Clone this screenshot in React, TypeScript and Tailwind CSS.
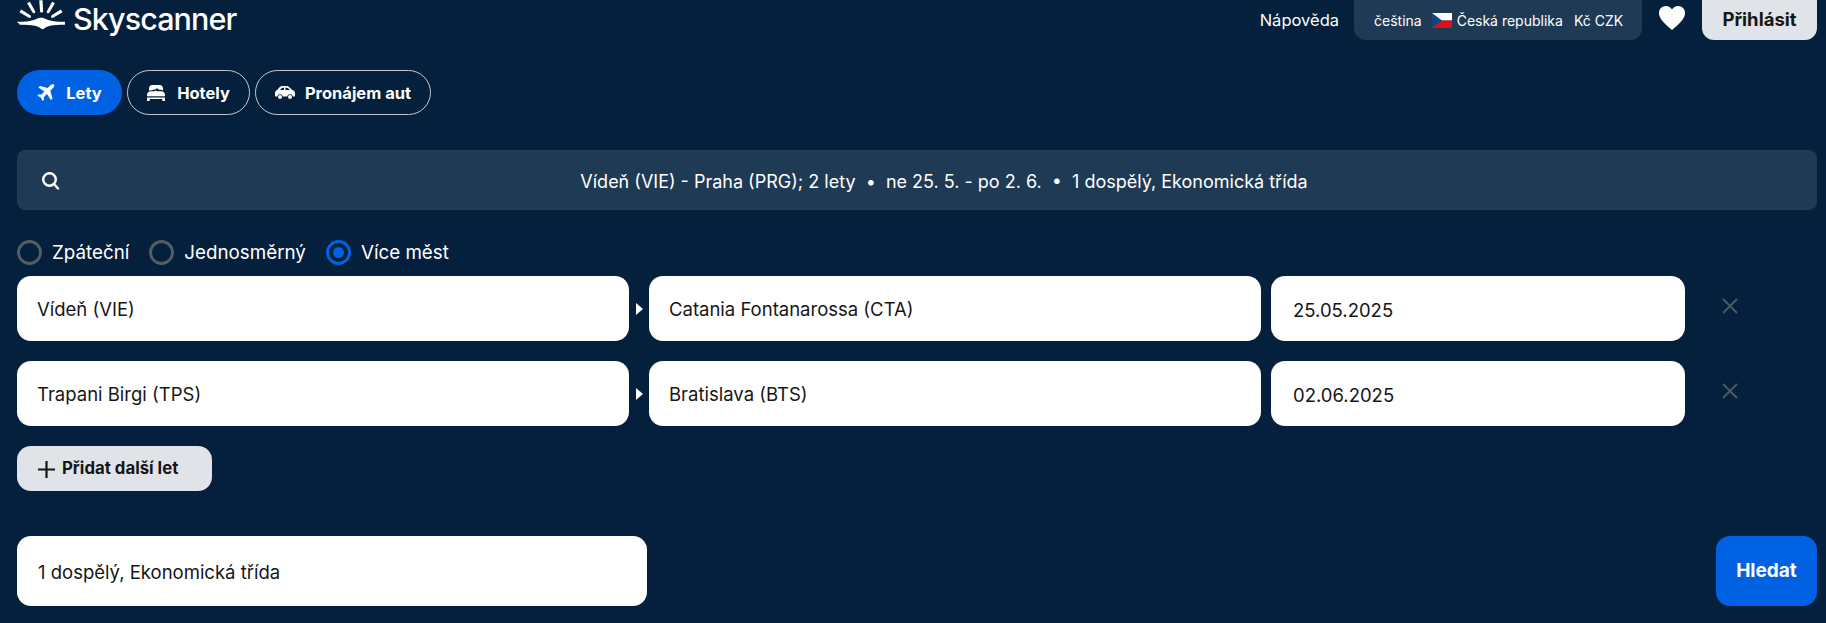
const font = "font-['Inter','Liberation_Sans',sans-serif]";

function Logo() {
  return (
    <div className="flex items-start h-[35px]">
      <svg width="48" height="31" viewBox="0 0 50 32" fill="#fff">
        <path d="M23.2 0h3.4l.6 11.5c0 .9-.6 1.5-1.6 1.5s-1.700-.6-1.600-1.500z" />
        <path d="M10.500 3.200l2.900-1.500 5.500 10c.4.800.1 1.500-.7 1.900s-1.600.1-2-.6z" />
        <path d="M39.500 3.200l-2.900-1.500-5.500 10c-.4.800-.1 1.500.7 1.900s1.600.1 2-.6z" />
        <path d="M2.600 12.500l1.800-2.800 9.500 6.100c.7.500.8 1.300.4 2s-1.200.9-1.900.5z" />
        <path d="M47.400 12.500l-1.800-2.800-9.500 6.100c-.7.500-.8 1.300-.4 2s1.200.9 1.900.5z" />
        <path d="M0 22.600c9.500 0 15.500-.9 20-3 1.900-.9 3.500-1.300 5-1.300s3.100.4 5 1.300c4.500 2.100 10.500 3 20 3v3.100c-6.500 0-11.500.2-15.500 1-2.400.5-4.300 1.300-6.200 2.800-1.200 1-2.300 1-3.400.1-1.900-1.600-3.800-2.400-6.300-2.900-4-.8-9.100-1-15.600-1z" />
      </svg>
      <span className="ml-[8px] mt-[2px] text-[30.500px] leading-[34px] font-medium text-white tracking-[-0.9px]">Skyscanner</span>
    </div>
  );
}

function PlaneIcon() {
  return (
    <svg width="18" height="18" viewBox="0 0 18 18" fill="#fff">
      <path d="M17.400.7c-.9-.9-2.600-.7-3.700.4l-3 3L3 1.900 1.400 3.500l6 3.900-3.200 3.300-2.300-.4L.5 11.700l3.300 1.900L5.700 17l1.400-1.400-.4-2.400 3.300-3.200 3.900 6 1.600-1.600-2.200-7.700 3-3c1.100-1.100 1.400-3 .6-3.900z" />
    </svg>
  );
}

function BedIcon() {
  return (
    <svg width="18" height="16" viewBox="0 0 18 16" fill="#fff">
      <path d="M2 5.500V3.200C2 1.400 3.400 0 5.200 0h7.600C14.600 0 16 1.400 16 3.200v2.300c-.7-.5-1.500-.7-2.300-.7h-.9c-.8 0-1.500-.4-2-1-.4-.4-1.100-.4-1.600 0-.5.6-1.200 1-2 1h-.9c-.8 0-1.600.2-2.300.7z" />
      <path d="M0 10c0-2.100 1.700-3.700 3.700-3.700h3c.9 0 1.700-.3 2.300-.9.600.6 1.400.9 2.300.9h3c2 0 3.700 1.600 3.700 3.700v1.300H0zM0 12.500h18V16h-2.400l-.8-2H3.200l-.8 2H0z" />
    </svg>
  );
}

function CarIcon() {
  return (
    <svg width="20" height="13" viewBox="0 0 20 13" fill="#fff">
      <path fillRule="evenodd" d="M4.500 1.300C5.400.5 6.600 0 7.800 0h3.300c1.300 0 2.500.5 3.500 1.400L17 3.800c1.700.3 3 1.700 3 3.500v2.200c0 .6-.4 1-1 1h-1.100a3 3 0 0 0-5.800 0H7.900a3 3 0 0 0-5.800 0H1c-.6 0-1-.4-1-1V7.200C0 5.800.9 4.600 2.200 4.100zM6.400 2.500L5 4h4V1.700H7.900c-.6 0-1.100.3-1.500.8zM10.500 1.700V4h4.300l-1.300-1.400c-.5-.6-1.200-.9-2-.9z" />
      <circle cx="5" cy="11" r="2" />
      <circle cx="15" cy="11" r="2" />
    </svg>
  );
}

function Tab({ label, icon, active, width, gap }: { label: string; icon: React.ReactNode; active?: boolean; width: string; gap: string }) {
  return (
    <button
      className={`flex items-center justify-center h-[45px] rounded-full text-[16.500px] font-bold text-white ${gap} ${width} ${
        active ? "bg-[#0062e3]" : "border border-[#c2c9cd]"
      }`}
    >
      {icon}
      <span className="mt-[1px]">{label}</span>
    </button>
  );
}

function Radio({ label, checked }: { label: string; checked?: boolean }) {
  return (
    <label className="flex items-center gap-[10px]">
      <span
        className={`flex items-center justify-center w-[25px] h-[25px] rounded-full border-[3px] ${
          checked ? "border-[#0062e3]" : "border-[#545c66]"
        }`}
      >
        {checked && <span className="w-[11px] h-[11px] rounded-full bg-[#0062e3]" />}
      </span>
      <span className="mt-[2px] text-[18.800px] text-white">{label}</span>
    </label>
  );
}

function Field({ value, width, pad = "pl-[20px]", date }: { value: string; width: string; pad?: string; date?: boolean }) {
  return (
    <div className={`flex items-center h-[65px] rounded-[14px] bg-white ${width} ${pad}`}>
      <span className={date ? "mt-[4px] text-[18.500px] text-[#161616]" : "mt-[3px] text-[18.500px] text-[#161616]"}>{value}</span>
    </div>
  );
}

function Leg({ from, to, date }: { from: string; to: string; date: string }) {
  return (
    <div className="flex items-center">
      <Field value={from} width="w-[612px]" />
      <div className="flex justify-center w-[20px]">
        <span className="w-0 h-0 border-y-[6px] border-y-transparent border-l-[7px] border-l-white" />
      </div>
      <Field value={to} width="w-[612px]" />
      <div className="w-[10px]" />
      <Field value={date} width="w-[414px]" pad="pl-[22px]" date />
      <svg width="18" height="18" viewBox="0 0 18 18" className="ml-[36px] -mt-[5px]" stroke="#4b5866" strokeWidth="2" fill="none">
        <path d="M2 2l14 14M16 2L2 16" />
      </svg>
    </div>
  );
}

export default function App() {
  return (
    <div className={`${font} w-[1826px] h-[623px] overflow-hidden bg-[#05203c] px-[17px] pr-[9px]`}>
      <header className="flex items-start justify-between h-[40px]">
        <Logo />
        <div className="flex items-start">
          <span className="mt-[8px] text-[16.500px] text-white">Nápověda</span>
          <div className="flex items-center ml-[15px] pl-[20px] w-[288px] h-[40px] rounded-b-[12px] bg-[#1f3a54] text-[14px] text-white">
            <span>čeština</span>
            <svg width="20" height="15" viewBox="0 0 20 15" className="ml-[10px]">
              <rect width="20" height="7.500" fill="#fff" />
              <rect y="7.500" width="20" height="7.500" fill="#d7141a" />
              <path d="M0 0l10 7.500L0 15z" fill="#11457e" />
            </svg>
            <span className="ml-[5px]">Česká republika</span>
            <span className="ml-[11px]">Kč CZK</span>
          </div>
          <svg width="26" height="24" viewBox="0 0 26 24" className="ml-[17px] mt-[6px]" fill="#fff">
            <path d="M13 24C6 18 0 13 0 7c0-4 3-7 6.800-7C9.300 0 11.700 1.300 13 3.500 14.300 1.300 16.700 0 19.200 0 23 0 26 3 26 7c0 6-6 11-13 17z" />
          </svg>
          <button className="ml-[17px] w-[115px] h-[40px] rounded-b-[12px] bg-[#e0e4e9] text-[18.500px] font-bold text-[#161616]">Přihlásit</button>
        </div>
      </header>

      <nav className="flex gap-[5px] mt-[30px]">
        <Tab label="Lety" icon={<PlaneIcon />} active width="w-[105px]" gap="gap-[11px]" />
        <Tab label="Hotely" icon={<BedIcon />} width="w-[123px]" gap="gap-[12px]" />
        <Tab label="Pronájem aut" icon={<CarIcon />} width="w-[176px]" gap="gap-[10px]" />
      </nav>

      <div className="relative flex items-center justify-center mt-[35px] pl-[54px] pt-[2px] w-[1800px] h-[60px] rounded-[8px] bg-[#1f3a54] text-[18px] text-white">
        <svg width="19" height="19" viewBox="0 0 19 19" className="absolute left-[24px] top-[21px]" fill="none" stroke="#fff" strokeWidth="2.400" strokeLinecap="round">
          <circle cx="8.500" cy="8.500" r="6.300" />
          <path d="M13 13l4 4.500" />
        </svg>
        <span className="whitespace-pre">Vídeň (VIE) - Praha (PRG); 2 lety  •  ne 25. 5. - po 2. 6.  •  1 dospělý, Ekonomická třída</span>
      </div>

      <div className="flex gap-[20px] mt-[30px] h-[24px] items-center">
        <Radio label="Zpáteční" />
        <Radio label="Jednosměrný" />
        <Radio label="Více měst" checked />
      </div>

      <div className="flex flex-col gap-[20px] mt-[12px]">
        <Leg from="Vídeň (VIE)" to="Catania Fontanarossa (CTA)" date="25.05.2025" />
        <Leg from="Trapani Birgi (TPS)" to="Bratislava (BTS)" date="02.06.2025" />
      </div>

      <button className="flex items-center gap-[6px] mt-[20px] pl-[20px] pt-[1px] w-[195px] h-[45px] rounded-[14px] bg-[#e0e4e9] text-[16.800px] font-bold text-[#161616]">
        <svg width="19" height="19" viewBox="0 0 19 19" stroke="#161616" strokeWidth="2.200" fill="none">
          <path d="M9.500 1v17M1 9.500h17" />
        </svg>
        Přidat další let
      </button>

      <div className="flex items-center justify-between mt-[45px] w-[1800px]">
        <div className="flex items-center h-[70px] w-[630px] pl-[21px] pt-[3px] rounded-[14px] bg-white text-[18.500px] text-[#161616]">1 dospělý, Ekonomická třída</div>
        <button className="w-[101px] h-[70px] pt-[1px] rounded-[14px] bg-[#0062e3] text-[19px] font-bold text-white">Hledat</button>
      </div>
    </div>
  );
}
